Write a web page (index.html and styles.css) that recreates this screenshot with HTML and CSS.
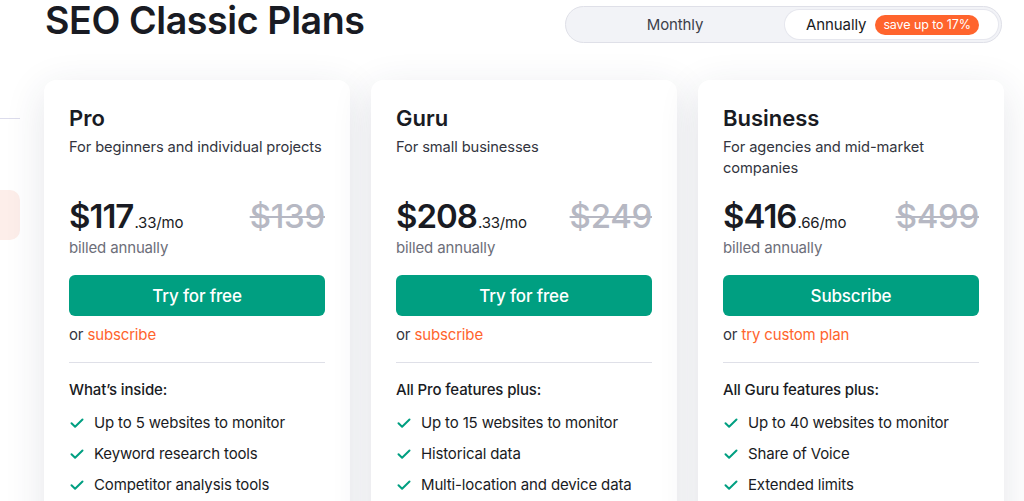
FILE: index.html
```html
<!DOCTYPE html>
<html lang="en">
<head>
<meta charset="utf-8">
<title>SEO Classic Plans</title>
<link rel="stylesheet" href="styles.css">
</head>
<body>
<div class="page">
  <aside class="side">
    <div class="side-rule"></div>
    <div class="side-chip"></div>
  </aside>
  <main class="main">
    <header class="head">
      <h1 class="title">SEO Classic Plans</h1>
      <div class="toggle">
        <button class="seg">Monthly</button>
        <button class="seg seg-active">Annually <span class="badge">save up to 17%</span></button>
      </div>
    </header>

    <section class="plans">
      <article class="card">
        <h2 class="plan-name">Pro</h2>
        <p class="plan-desc">For beginners and individual projects</p>
        <div class="price-row">
          <div class="price"><span class="amount">$117</span><span class="cents">.33/mo</span></div>
          <div class="old-price">$139</div>
        </div>
        <p class="billed">billed annually</p>
        <a class="cta" href="#">Try for free</a>
        <p class="alt">or <a href="#">subscribe</a></p>
        <hr class="rule">
        <p class="feat-head">What’s inside:</p>
        <ul class="feats">
          <li><svg class="tick" viewBox="0 0 16 16"><path d="M2.5 8.3l3.6 3.5 7.4-7.3"/></svg>Up to 5 websites to monitor</li>
          <li><svg class="tick" viewBox="0 0 16 16"><path d="M2.5 8.3l3.6 3.5 7.4-7.3"/></svg>Keyword research tools</li>
          <li><svg class="tick" viewBox="0 0 16 16"><path d="M2.5 8.3l3.6 3.5 7.4-7.3"/></svg>Competitor analysis tools</li>
        </ul>
      </article>

      <article class="card">
        <h2 class="plan-name">Guru</h2>
        <p class="plan-desc">For small businesses</p>
        <div class="price-row">
          <div class="price"><span class="amount">$208</span><span class="cents">.33/mo</span></div>
          <div class="old-price">$249</div>
        </div>
        <p class="billed">billed annually</p>
        <a class="cta" href="#">Try for free</a>
        <p class="alt">or <a href="#">subscribe</a></p>
        <hr class="rule">
        <p class="feat-head">All Pro features plus:</p>
        <ul class="feats">
          <li><svg class="tick" viewBox="0 0 16 16"><path d="M2.5 8.3l3.6 3.5 7.4-7.3"/></svg>Up to 15 websites to monitor</li>
          <li><svg class="tick" viewBox="0 0 16 16"><path d="M2.5 8.3l3.6 3.5 7.4-7.3"/></svg>Historical data</li>
          <li><svg class="tick" viewBox="0 0 16 16"><path d="M2.5 8.3l3.6 3.5 7.4-7.3"/></svg>Multi-location and device data</li>
        </ul>
      </article>

      <article class="card">
        <h2 class="plan-name">Business</h2>
        <p class="plan-desc">For agencies and mid-market companies</p>
        <div class="price-row">
          <div class="price"><span class="amount">$416</span><span class="cents">.66/mo</span></div>
          <div class="old-price">$499</div>
        </div>
        <p class="billed">billed annually</p>
        <a class="cta" href="#">Subscribe</a>
        <p class="alt">or <a href="#">try custom plan</a></p>
        <hr class="rule">
        <p class="feat-head">All Guru features plus:</p>
        <ul class="feats">
          <li><svg class="tick" viewBox="0 0 16 16"><path d="M2.5 8.3l3.6 3.5 7.4-7.3"/></svg>Up to 40 websites to monitor</li>
          <li><svg class="tick" viewBox="0 0 16 16"><path d="M2.5 8.3l3.6 3.5 7.4-7.3"/></svg>Share of Voice</li>
          <li><svg class="tick" viewBox="0 0 16 16"><path d="M2.5 8.3l3.6 3.5 7.4-7.3"/></svg>Extended limits</li>
        </ul>
      </article>
    </section>
  </main>
</div>
</body>
</html>
```

FILE: styles.css
```css
* { box-sizing: border-box; }

html, body {
  margin: 0;
  padding: 0;
  background: #ffffff;
  height: 501px;
  overflow: hidden;
}

body {
  font-family: Inter, "Noto Sans", sans-serif;
  color: #191b23;
  -webkit-font-smoothing: antialiased;
}

.page {
  display: flex;
  align-items: flex-start;
}

/* Edge of the neighbouring column */
.side {
  width: 20px;
  flex: none;
  padding-top: 118px;
}
.side-rule {
  height: 1px;
  background: #dcdcec;
}
.side-chip {
  margin-top: 71px;
  height: 50px;
  background: #fdeeea;
  border-radius: 0 10px 10px 0;
}

.main {
  flex: 1;
  margin-left: 24px;
  padding-right: 20px;
}

.head {
  display: flex;
  align-items: flex-start;
  justify-content: space-between;
}

.title {
  margin: 0;
  font-size: 37.6px;
  line-height: 42px;
  font-weight: 600;
  letter-spacing: -0.4px;
  color: #191b23;
  padding-left: 1px;
}

.toggle {
  margin-top: 6px;
  margin-right: 2px;
  width: 437px;
  height: 37px;
  display: flex;
  padding: 3px;
  background: #f2f3f7;
  border: 1px solid #dfe0e8;
  border-radius: 19px;
}

.seg {
  flex: 1;
  border: 0;
  background: transparent;
  font: inherit;
  font-size: 15px;
  letter-spacing: -0.1px;
  color: #3d3f4a;
  border-radius: 16px;
  display: flex;
  align-items: center;
  justify-content: center;
  gap: 9px;
  padding: 0;
}
.seg:first-child { flex: 0 0 216px; padding-right: 4px; }
.seg-active {
  background: #ffffff;
  color: #191b23;
  box-shadow: 0 0 0 1px #e6e7ee;
  padding-left: 2px;
}

.badge {
  background: #ff642d;
  color: #ffffff;
  font-size: 12.5px;
  line-height: 20px;
  padding: 0 8px;
  border-radius: 10px;
}

.plans {
  display: grid;
  grid-template-columns: repeat(3, 306px);
  gap: 21px;
  margin-top: 37px;
}

.card {
  background: #ffffff;
  border-radius: 12px;
  padding: 25px 25px 30px;
  height: 460px;
  box-shadow: 0 10px 40px rgba(40, 46, 80, 0.12);
}

.plan-name {
  margin: 0;
  font-size: 22px;
  line-height: 26px;
  font-weight: 600;
  color: #191b23;
}

.plan-desc {
  margin: 6px 0 0;
  font-size: 14.7px;
  letter-spacing: -0.1px;
  line-height: 21px;
  color: #333540;
  min-height: 42px;
}

.price-row {
  margin-top: 17px;
  display: flex;
  justify-content: space-between;
  align-items: baseline;
}

.price { display: flex; align-items: baseline; }
.amount {
  font-size: 33px;
  line-height: 40px;
  font-weight: 600;
  letter-spacing: -1px;
  color: #191b23;
}
.cents {
  font-size: 15px;
  letter-spacing: -0.2px;
  color: #191b23;
  margin-left: 1px;
}

.old-price {
  font-size: 33px;
  line-height: 40px;
  font-weight: 500;
  color: #b6b8c3;
  text-decoration: line-through;
  text-decoration-thickness: 2px;
  letter-spacing: -0.3px;
}

.billed {
  margin: 1px 0 0;
  font-size: 15px;
  letter-spacing: -0.15px;
  line-height: 21px;
  color: #6c6e79;
}

.cta {
  display: flex;
  align-items: center;
  justify-content: center;
  margin-top: 17px;
  height: 41px;
  background: #009f81;
  border-radius: 6px;
  color: #ffffff;
  font-size: 17px;
  letter-spacing: -0.15px;
  font-weight: 500;
  text-decoration: none;
}

.alt {
  margin: 8px 0 0;
  font-size: 15px;
  letter-spacing: -0.15px;
  line-height: 21px;
  color: #333540;
}
.alt a {
  color: #ff642d;
  text-decoration: none;
}

.rule {
  margin: 17px 0 0;
  border: 0;
  height: 1px;
  background: #dfe0e8;
}

.feat-head {
  margin: 16px 0 0;
  font-size: 15px;
  letter-spacing: -0.15px;
  line-height: 21px;
  font-weight: 500;
  color: #191b23;
}

.feats {
  list-style: none;
  margin: 12px 0 0;
  padding: 0;
}
.feats li {
  display: flex;
  align-items: center;
  font-size: 15px;
  letter-spacing: -0.15px;
  line-height: 21px;
  color: #191b23;
  margin-bottom: 10px;
}

.tick {
  width: 16px;
  height: 16px;
  flex: none;
  margin-right: 9px;
  fill: none;
  stroke: #009f81;
  stroke-width: 2;
  stroke-linecap: round;
  stroke-linejoin: round;
}
```
